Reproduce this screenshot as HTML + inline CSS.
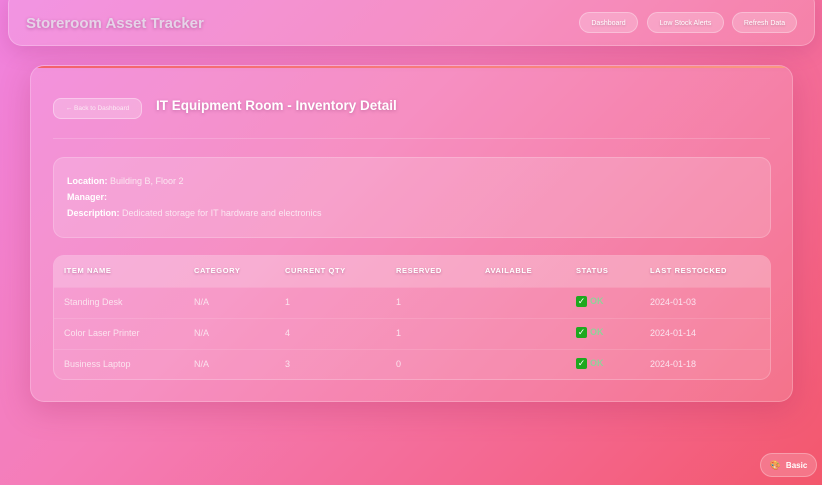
<!DOCTYPE html>
<html><head><meta charset="utf-8"><style>
*{box-sizing:border-box;margin:0;padding:0}
html,body{width:822px;height:485px;overflow:hidden}
body{font-family:"Liberation Sans","DejaVu Sans",sans-serif;background:linear-gradient(135deg,#f083df 0%,#f57db8 40%,#f4678f 75%,#f3576c 100%);position:relative;color:#fff}
.hdr{position:absolute;left:8px;top:-10px;width:807px;height:56px;border-radius:14px;background:rgba(255,255,255,.14);border:1px solid rgba(255,255,255,.25);box-shadow:0 6px 20px rgba(150,40,110,.2)}
.hdr h1{position:absolute;left:17px;top:24px;font-size:15px;font-weight:bold;color:#e6d3e8;text-shadow:0 1px 3px rgba(120,40,100,.4)}
.nb{position:absolute;top:12px;height:21px;border-radius:11px;background:rgba(255,255,255,.22);border:1px solid rgba(255,255,255,.3);font-size:7px;display:flex;align-items:center;justify-content:center;text-shadow:0 1px 2px rgba(0,0,0,.2);padding-top:1px}
.card{position:absolute;left:30px;top:65px;width:763px;height:337px;border-radius:14px;background:rgba(255,255,255,.14);border:1px solid rgba(255,255,255,.22);box-shadow:0 8px 30px rgba(160,40,90,.25);overflow:hidden}
.card:before{content:"";position:absolute;left:0;top:0;right:0;height:2px;background:linear-gradient(90deg,#f4606a,#f77a7a,#f99a80)}
.back{position:absolute;left:22px;top:32px;width:89px;height:21px;border-radius:8px;background:rgba(255,255,255,.22);border:1px solid rgba(255,255,255,.35);font-size:6.5px;display:flex;align-items:center;justify-content:center;color:#fbe9f4}
.title{position:absolute;left:125px;top:32px;font-size:13.5px;font-weight:bold;text-shadow:0 1px 3px rgba(120,40,100,.35)}
.div{position:absolute;left:22px;right:22px;top:72px;height:1px;background:rgba(255,255,255,.18)}
.info{position:absolute;left:22px;top:91px;width:718px;height:81px;border-radius:11px;background:rgba(255,255,255,.16);border:1px solid rgba(255,255,255,.2);padding:15px 13px;font-size:9px;line-height:16px;color:#fbe6f1}
.info b{color:#fff}
.tbl{position:absolute;left:22px;top:189px;width:718px;height:125px;border-radius:11px;background:rgba(255,255,255,.1);border:1px solid rgba(255,255,255,.22);overflow:hidden}
.th{position:absolute;left:0;top:0;right:0;height:31px;background:rgba(255,255,255,.2)}
.th span{position:absolute;top:10px;font-size:7.5px;font-weight:bold;letter-spacing:.6px;text-shadow:0 1px 2px rgba(120,40,90,.4)}
.row{position:absolute;left:0;right:0;height:31px;border-top:1px solid rgba(255,255,255,.12)}
.row span{position:absolute;top:9px;font-size:9px;color:#fbe3ee}
.row span.ok{color:#8fd39a;font-weight:bold;top:7px;display:flex;align-items:center;height:13px;line-height:13px}
.chk{display:inline-block;width:11px;height:11px;background:#1fa81f;border-radius:2px;color:#fff;font-size:9px;line-height:11px;text-align:center;margin-right:3px;font-style:normal}
.basic{position:absolute;left:760px;top:453px;width:57px;height:24px;border-radius:12px;background:rgba(255,255,255,.18);border:1px solid rgba(255,255,255,.28);font-size:8px;font-weight:bold;display:flex;align-items:center;justify-content:center;gap:5px}
</style></head><body>
<div class="hdr"><h1>Storeroom Asset Tracker</h1></div>
<div class="nb" style="left:579px;width:59px">Dashboard</div>
<div class="nb" style="left:647px;width:77px">Low Stock Alerts</div>
<div class="nb" style="left:732px;width:65px">Refresh Data</div>
<div class="card">
<div class="back">← Back to Dashboard</div>
<div class="title">IT Equipment Room - Inventory Detail</div>
<div class="div"></div>
<div class="info"><div><b>Location:</b> Building B, Floor 2</div><div><b>Manager:</b></div><div><b>Description:</b> Dedicated storage for IT hardware and electronics</div></div>
<div class="tbl">
<div class="th"><span style="left:10px">ITEM NAME</span><span style="left:140px">CATEGORY</span><span style="left:231px">CURRENT QTY</span><span style="left:342px">RESERVED</span><span style="left:431px">AVAILABLE</span><span style="left:522px">STATUS</span><span style="left:596px">LAST RESTOCKED</span></div>
<div class="row" style="top:31px"><span style="left:10px">Standing Desk</span><span style="left:140px">N/A</span><span style="left:231px">1</span><span style="left:342px">1</span><span style="left:522px" class="ok"><i class="chk">✓</i>OK</span><span style="left:596px">2024-01-03</span></div>
<div class="row" style="top:62px"><span style="left:10px">Color Laser Printer</span><span style="left:140px">N/A</span><span style="left:231px">4</span><span style="left:342px">1</span><span style="left:522px" class="ok"><i class="chk">✓</i>OK</span><span style="left:596px">2024-01-14</span></div>
<div class="row" style="top:93px"><span style="left:10px">Business Laptop</span><span style="left:140px">N/A</span><span style="left:231px">3</span><span style="left:342px">0</span><span style="left:522px" class="ok"><i class="chk">✓</i>OK</span><span style="left:596px">2024-01-18</span></div>
</div>
</div>
<div class="basic"><span style="font-size:9px">🎨</span>Basic</div>
</body></html>
